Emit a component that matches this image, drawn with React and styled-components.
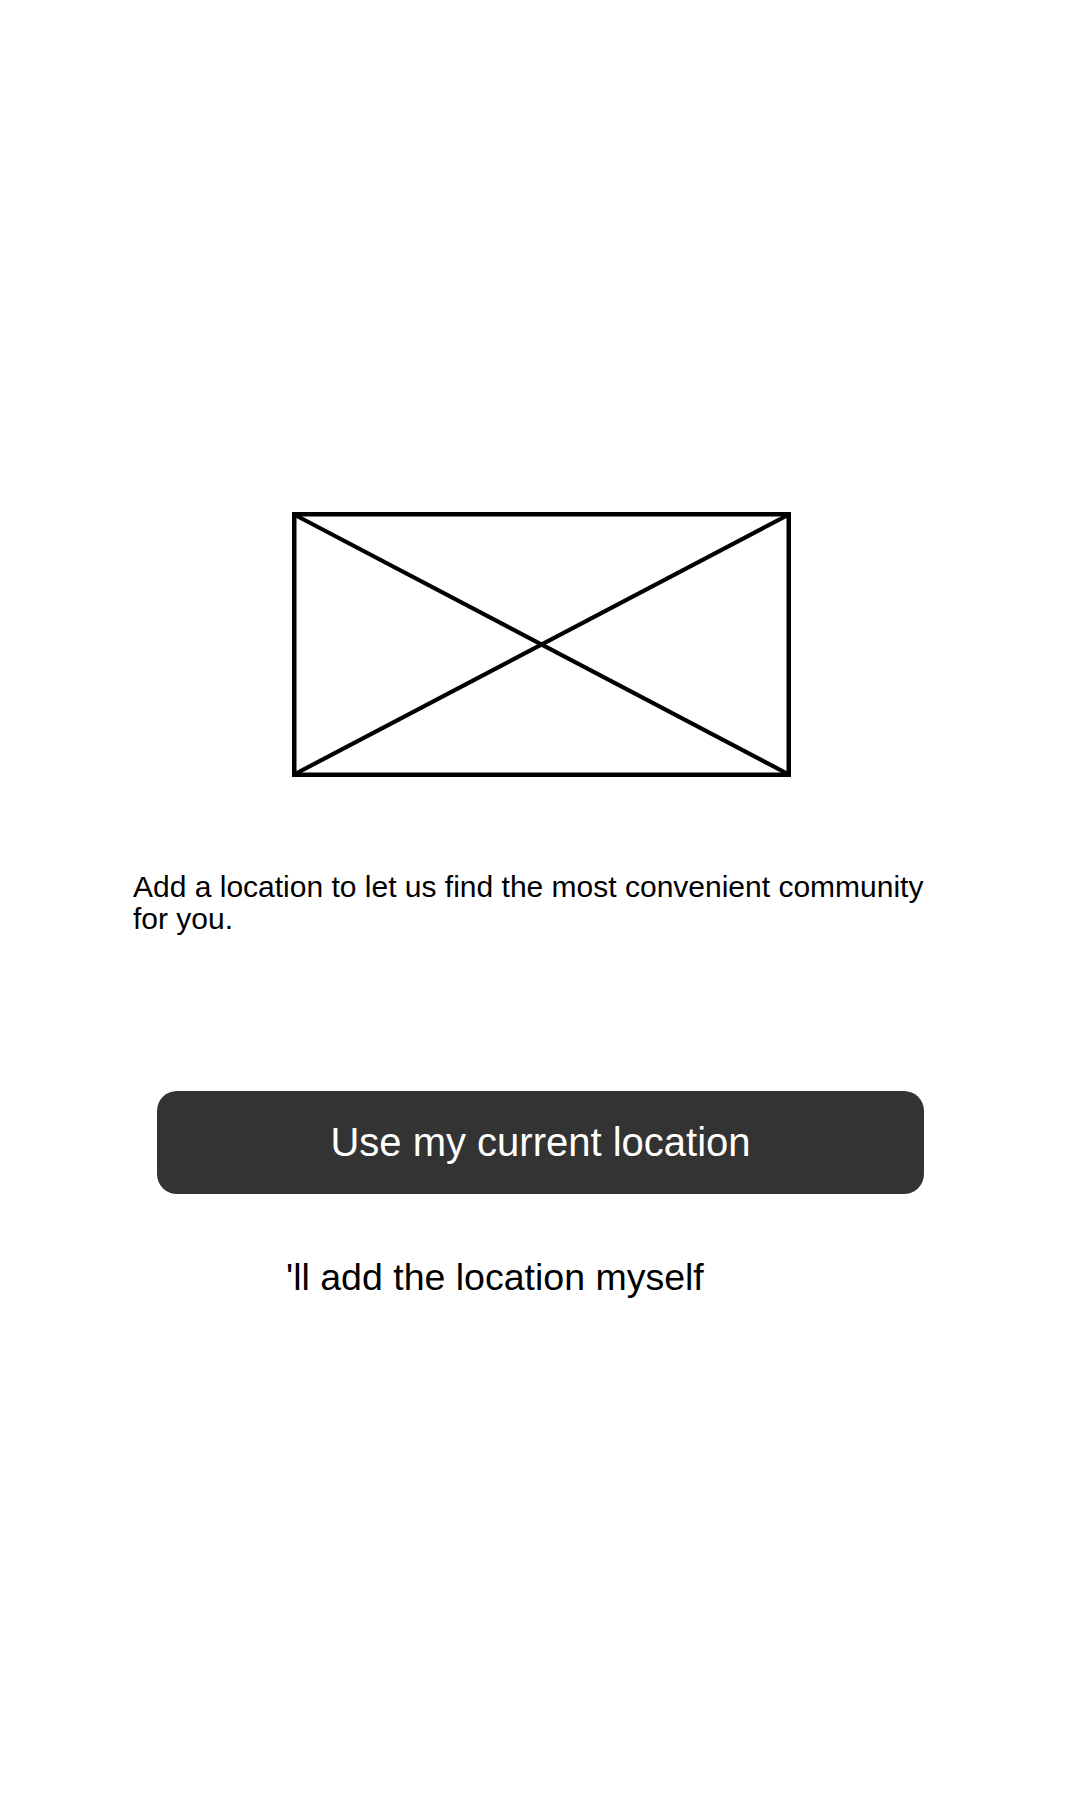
import styled, { createGlobalStyle } from "styled-components";

const GlobalStyle = createGlobalStyle`
  body {
    margin: 0;
    background: #ffffff;
    font-family: "Liberation Sans", Arial, sans-serif;
    color: #000000;
  }
`;

const Page = styled.div`
  width: 1080px;
  min-height: 1800px;
  padding-top: 512px;
  box-sizing: border-box;
`;

const Placeholder = styled.svg`
  display: block;
  width: 499px;
  height: 265px;
  margin: 0 auto 0 292px;
`;

const Message = styled.p`
  margin: 94px 0 0 0;
  padding: 0 133px;
  font-size: 30px;
  line-height: 32px;
  color: #000000;
`;

const PrimaryButton = styled.button`
  display: flex;
  align-items: center;
  justify-content: center;
  width: 767px;
  height: 103px;
  margin: 156px 0 0 157px;
  border: none;
  border-radius: 20px;
  background: #333333;
  color: #ffffff;
  font-family: "Liberation Sans", Arial, sans-serif;
  font-size: 40px;
  cursor: pointer;
`;

const ManualLink = styled.a`
  display: block;
  margin: 65px 0 0 286px;
  font-size: 37.5px;
  line-height: 1;
  color: #000000;
  text-decoration: none;
  cursor: pointer;
`;

const App = () => {
  return (
    <>
      <GlobalStyle />
      <Page>
        <Placeholder viewBox="0 0 499 265">
          <rect x="2.25" y="2.25" width="494.5" height="260.5" fill="none" stroke="#000" strokeWidth="4.5" />
          <line x1="3" y1="3" x2="496" y2="262" stroke="#000" strokeWidth="4.2" />
          <line x1="3" y1="262" x2="496" y2="3" stroke="#000" strokeWidth="4.2" />
        </Placeholder>
        <Message>
          Add a location to let us find the most convenient community for you.
        </Message>
        <PrimaryButton>Use my current location</PrimaryButton>
        <ManualLink>'ll add the location myself</ManualLink>
      </Page>
    </>
  );
};

export default App;
